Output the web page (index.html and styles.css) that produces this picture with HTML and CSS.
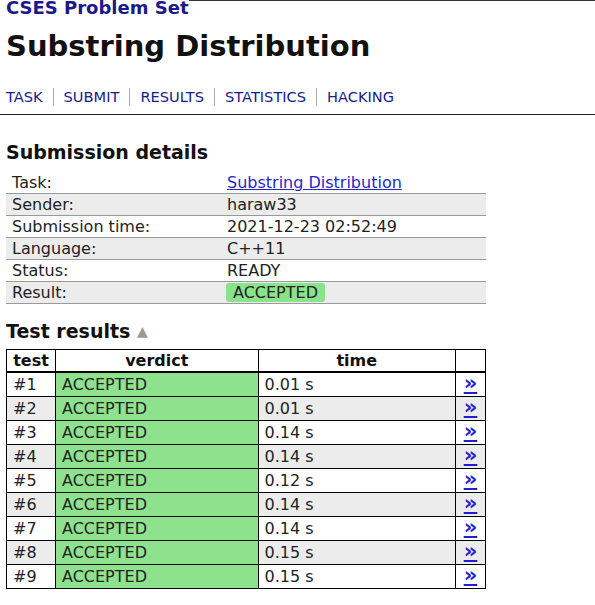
FILE: index.html
```html
<!DOCTYPE html>
<html>
<head>
<meta charset="utf-8">
<link rel="stylesheet" href="styles.css">
</head>
<body>
<div class="top">
  <a class="site" href="#">CSES Problem Set</a>
  <span class="top-rule"></span>
</div>
<h1 class="title">Substring Distribution</h1>
<nav class="nav">
  <a href="#">TASK</a><a href="#">SUBMIT</a><a href="#">RESULTS</a><a href="#">STATISTICS</a><a href="#">HACKING</a>
</nav>
<div class="rule"></div>
<h3 class="section">Submission details</h3>
<table class="details">
  <tr><td class="label">Task:</td><td><a class="link" href="#">Substring Distribution</a></td></tr>
  <tr class="alt"><td class="label">Sender:</td><td>haraw33</td></tr>
  <tr><td class="label">Submission time:</td><td>2021-12-23 02:52:49</td></tr>
  <tr class="alt"><td class="label">Language:</td><td>C++11</td></tr>
  <tr><td class="label">Status:</td><td>READY</td></tr>
  <tr class="alt"><td class="label">Result:</td><td><span class="badge">ACCEPTED</span></td></tr>
</table>
<h3 class="section results-title">Test results <span class="tri">▲</span></h3>
<table class="results">
  <tr class="head"><th class="c-test">test</th><th class="c-verdict">verdict</th><th class="c-time">time</th><th class="c-link"></th></tr>
  <tr><td>#1</td><td class="ok">ACCEPTED</td><td>0.01 s</td><td class="c-link"><a href="#">»</a></td></tr>
  <tr class="alt"><td>#2</td><td class="ok">ACCEPTED</td><td>0.01 s</td><td class="c-link"><a href="#">»</a></td></tr>
  <tr><td>#3</td><td class="ok">ACCEPTED</td><td>0.14 s</td><td class="c-link"><a href="#">»</a></td></tr>
  <tr class="alt"><td>#4</td><td class="ok">ACCEPTED</td><td>0.14 s</td><td class="c-link"><a href="#">»</a></td></tr>
  <tr><td>#5</td><td class="ok">ACCEPTED</td><td>0.12 s</td><td class="c-link"><a href="#">»</a></td></tr>
  <tr class="alt"><td>#6</td><td class="ok">ACCEPTED</td><td>0.14 s</td><td class="c-link"><a href="#">»</a></td></tr>
  <tr><td>#7</td><td class="ok">ACCEPTED</td><td>0.14 s</td><td class="c-link"><a href="#">»</a></td></tr>
  <tr class="alt"><td>#8</td><td class="ok">ACCEPTED</td><td>0.15 s</td><td class="c-link"><a href="#">»</a></td></tr>
  <tr><td>#9</td><td class="ok">ACCEPTED</td><td>0.15 s</td><td class="c-link"><a href="#">»</a></td></tr>
</table>
</body>
</html>
```
FILE: styles.css
```css
html, body {
  margin: 0;
  padding: 0;
  background: #fff;
}
body {
  font-family: "DejaVu Sans", Verdana, sans-serif;
  color: #222;
  font-size: 16px;
}
.top {
  display: flex;
  align-items: flex-start;
  height: 20px;
  padding-left: 6px;
}
.site {
  font-size: 18px;
  font-weight: bold;
  color: #1a1a8a;
  text-decoration: none;
  line-height: 18px;
  margin-top: -1px;
}
.top-rule {
  flex: 1;
  border-top: 1px solid #333;
}
.title {
  margin: 8px 0 0 6px;
  font-size: 29px;
  line-height: 36px;
  color: #111;
}
.nav {
  display: flex;
  margin: 24px 0 0 6px;
  font-size: 14.6px;
  line-height: 18px;
}
.nav a {
  color: #1a1a8a;
  text-decoration: none;
  padding: 0 10px;
  border-left: 1px solid #aaa;
}
.nav a:first-child {
  padding-left: 0;
  border-left: none;
}
.rule {
  margin-top: 8px;
  border-top: 1px solid #222;
}
.section {
  margin: 25px 0 0 6px;
  font-size: 19px;
  line-height: 24px;
  color: #111;
}
.details {
  margin: 8px 0 0 6px;
  width: 480px;
  border-collapse: collapse;
}
.details td {
  padding: 0 6px;
  height: 21px;
  line-height: 21px;
  border-bottom: 1px solid #999;
}
.details td.label {
  width: 203px;
}
.details tr.alt td {
  background: #ececec;
}
.link {
  color: #2727c7;
}
.badge {
  display: inline-block;
  background: #8ae28a;
  border-radius: 3px;
  padding: 0 7px;
  line-height: 19px;
  margin-left: -1px;
}
.results-title {
  margin-top: 15px;
}
.tri {
  font-size: 14px;
  color: #999;
  vertical-align: 2px;
}
.results {
  margin: 6px 0 0 6px;
  width: 480px;
  border-collapse: collapse;
  border: 1px solid #000;
}
.results th, .results td {
  border: 1px solid #000;
  padding: 0 6px;
  height: 23px;
  line-height: 23px;
}
.results th {
  font-weight: bold;
  color: #111;
  height: 21px;
  line-height: 21px;
  border-bottom: 2px solid #000;
}
.c-test { width: 36px; }
.c-verdict { width: 190px; }
.c-time { width: 185px; }
.c-link { width: 17px; text-align: center; }
.results tr.alt td {
  background: #ececec;
}
.results td.ok {
  background: #8ee28e;
}
.results tr.alt td.ok {
  background: #8ee28e;
}
.c-link a {
  color: #1f1fd6;
  font-weight: bold;
  font-size: 21px;
  line-height: 21px;
  vertical-align: top;
}
```
